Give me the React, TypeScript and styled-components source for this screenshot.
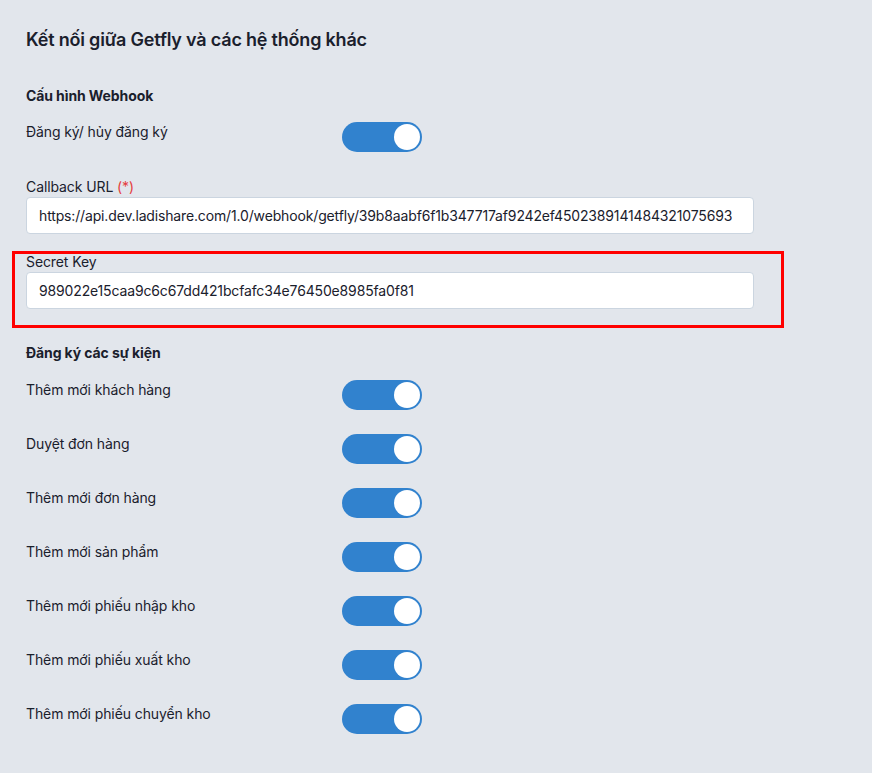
import React from "react";
import styled, { createGlobalStyle } from "styled-components";

const GlobalStyle = createGlobalStyle`
  html, body {
    margin: 0;
    padding: 0;
    background: #e2e6ec;
  }
  body {
    font-family: Inter, "Noto Sans", "Liberation Sans", sans-serif;
    color: #1a202c;
    -webkit-font-smoothing: antialiased;
  }
  * { box-sizing: border-box; }
`;

const Page = styled.div`
  width: 872px;
  min-height: 773px;
  padding: 28px 26px 30px 26px;
  background: #e2e6ec;
`;

const Form = styled.div`
  width: 728px;
  display: flex;
  flex-direction: column;
`;

const Title = styled.h2`
  margin: 0 0 34px 0;
  font-size: 18px;
  line-height: 24px;
  font-weight: 600;
  letter-spacing: -0.2px;
`;

const SectionTitle = styled.h3<{ $mb?: number }>`
  margin: 0 0 ${(p) => p.$mb ?? 16}px 0;
  font-size: 14px;
  line-height: 20px;
  font-weight: 700;
  letter-spacing: -0.1px;
`;

const SwitchRow = styled.div<{ $mb?: number }>`
  display: flex;
  align-items: flex-start;
  margin-bottom: ${(p) => p.$mb ?? 24}px;
`;

const RowLabel = styled.div`
  width: 316px;
  font-size: 14px;
  line-height: 20px;
  letter-spacing: -0.1px;
`;

const Track = styled.button<{ $on: boolean }>`
  position: relative;
  width: 80px;
  height: 30px;
  padding: 0;
  border: none;
  border-radius: 15px;
  background: ${(p) => (p.$on ? "#3182ce" : "#cbd5e0")};
  cursor: pointer;
`;

const Knob = styled.span<{ $on: boolean }>`
  position: absolute;
  top: 2px;
  left: ${(p) => (p.$on ? "52px" : "2px")};
  width: 26px;
  height: 26px;
  border-radius: 50%;
  background: #ffffff;
`;

const Field = styled.div<{ $mb?: number }>`
  display: flex;
  flex-direction: column;
  margin-bottom: ${(p) => p.$mb ?? 0}px;
`;

const FieldLabel = styled.label`
  font-size: 14px;
  line-height: 16px;
  margin-bottom: 2px;
  letter-spacing: -0.1px;
`;

const Required = styled.span`
  color: #e53e3e;
`;

const Input = styled.input`
  width: 100%;
  height: 37px;
  padding: 0 12px;
  border: 1px solid #cbd5e0;
  border-radius: 4px;
  background: #ffffff;
  font-family: inherit;
  font-size: 14px;
  letter-spacing: -0.15px;
  color: #1a202c;
  outline: none;
`;

const Highlight = styled.div`
  margin: 0 -30px 15px -14px;
  padding: 0 27px 16px 11px;
  border: 3px solid #ff0000;
`;

const events = [
  "Thêm mới khách hàng",
  "Duyệt đơn hàng",
  "Thêm mới đơn hàng",
  "Thêm mới sản phẩm",
  "Thêm mới phiếu nhập kho",
  "Thêm mới phiếu xuất kho",
  "Thêm mới phiếu chuyển kho",
];

const Toggle: React.FC<{ on?: boolean }> = ({ on = true }) => (
  <Track $on={on} type="button" aria-pressed={on}>
    <Knob $on={on} />
  </Track>
);

export default function App() {
  return (
    <>
      <GlobalStyle />
      <Page>
        <Form>
          <Title>Kết nối giữa Getfly và các hệ thống khác</Title>
          <SectionTitle>Cấu hình Webhook</SectionTitle>
          <SwitchRow $mb={27}>
            <RowLabel>Đăng ký/ hủy đăng ký</RowLabel>
            <Toggle />
          </SwitchRow>
          <Field $mb={17}>
            <FieldLabel>
              Callback URL <Required>(*)</Required>
            </FieldLabel>
            <Input
              readOnly
              value="https://api.dev.ladishare.com/1.0/webhook/getfly/39b8aabf6f1b347717af9242ef4502389141484321075693"
            />
          </Field>
          <Highlight>
            <Field>
              <FieldLabel>Secret Key</FieldLabel>
              <Input readOnly value="989022e15caa9c6c67dd421bcfafc34e76450e8985fa0f81" />
            </Field>
          </Highlight>
          <SectionTitle $mb={17}>Đăng ký các sự kiện</SectionTitle>
          {events.map((e) => (
            <SwitchRow key={e}>
              <RowLabel>{e}</RowLabel>
              <Toggle />
            </SwitchRow>
          ))}
        </Form>
      </Page>
    </>
  );
}
